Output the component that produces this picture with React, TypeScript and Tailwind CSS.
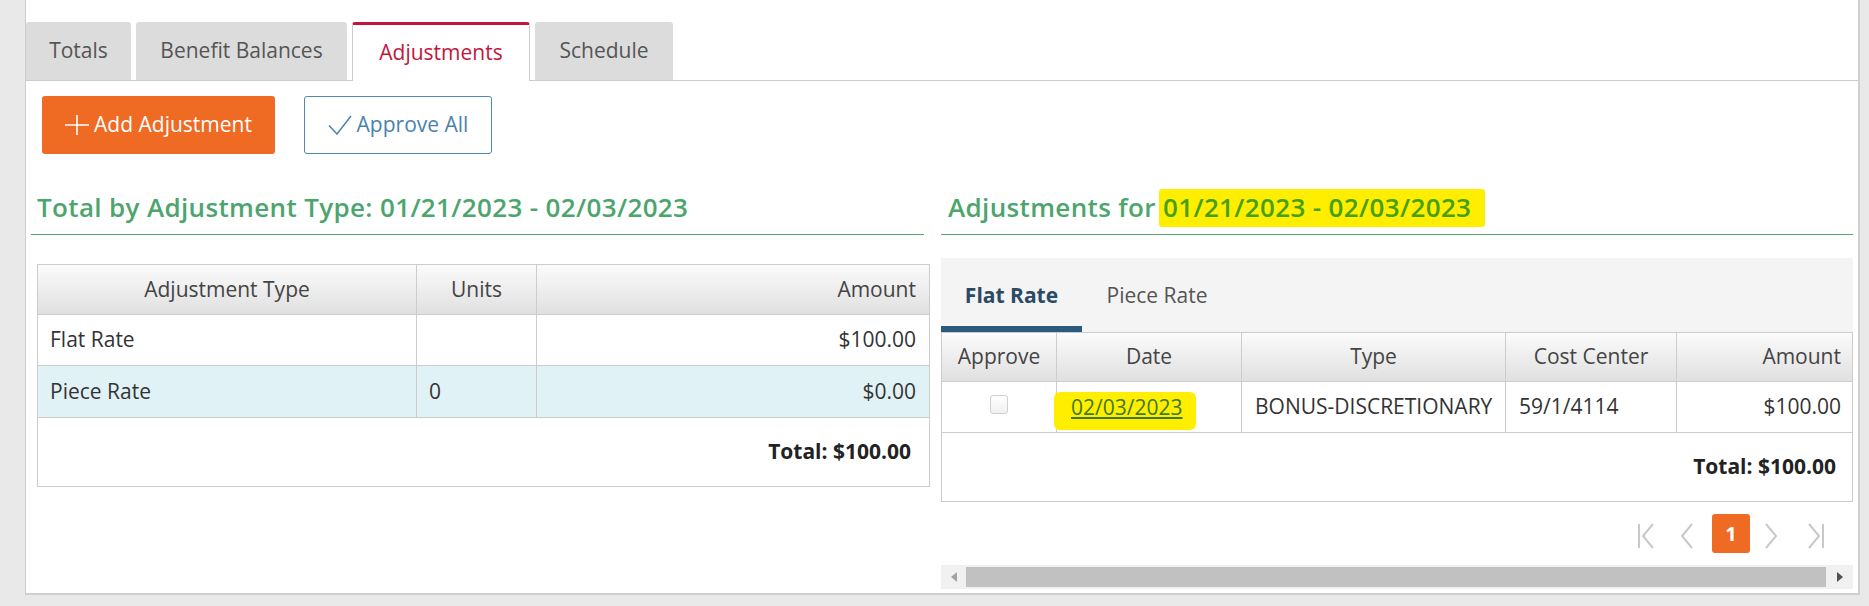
import React from 'react';

function PlusIcon() {
  return (
    <svg width="24" height="20" viewBox="0 0 24 20" fill="none" stroke="currentColor" strokeWidth="1.6">
      <path d="M12 0v20M0 10h24" />
    </svg>
  );
}

function CheckIcon() {
  return (
    <svg width="24" height="20" viewBox="0 0 24 20" fill="none" stroke="currentColor" strokeWidth="1.5">
      <path d="M1 10.5l8 8.5L23 1" />
    </svg>
  );
}

function PageIcon({ kind }: { kind: 'first' | 'prev' | 'next' | 'last' }) {
  const d =
    kind === 'first'
      ? 'M2 1v24M16 1L6 13l10 12'
      : kind === 'prev'
      ? 'M13 1L3 13l10 12'
      : kind === 'next'
      ? 'M3 1l10 12L3 25'
      : 'M18 1v24M4 1l10 12L4 25';
  return (
    <svg width="20" height="26" viewBox="0 0 20 26" fill="none" stroke="#c9c9c9" strokeWidth="2">
      <path d={d} />
    </svg>
  );
}

function Tab({ label, width, active }: { label: string; width: string; active?: boolean }) {
  if (active) {
    return (
      <div
        className={`${width} relative h-[59px] -mb-px flex items-center justify-center rounded-t-[3px] bg-white border-t-[3px] border-t-[#c3163c] border-x border-x-[#cccccc] text-[21px] text-[#c3163c]`}
      >
        {label}
      </div>
    );
  }
  return (
    <div className={`${width} h-[58px] flex items-center justify-center rounded-t-[3px] bg-[#dcdcdc] text-[21px] text-[#555555]`}>
      {label}
    </div>
  );
}

const headBg = 'bg-linear-to-b from-[#fbfbfb] to-[#e0e0e0]';

export default function App() {
  return (
    <div className="w-[1869px] h-[606px] bg-[#e9e9e9] font-['Open_Sans',sans-serif] overflow-hidden">
      <div className="ml-[25px] w-[1835px] h-[595px] bg-white border-l border-[#cccccc] border-r-2 border-r-[#d0d0d0] border-b-2 border-b-[#cfcfcf] pt-[22px]">
        {/* top tabs */}
        <div className="flex items-end gap-[5px] h-[59px] border-b border-[#cccccc]">
          <Tab label="Totals" width="w-[105px]" />
          <Tab label="Benefit Balances" width="w-[211px]" />
          <Tab label="Adjustments" width="w-[178px]" active />
          <Tab label="Schedule" width="w-[138px]" />
        </div>

        {/* buttons */}
        <div className="flex gap-[29px] pl-[16px] mt-[15px]">
          <button className="w-[233px] h-[58px] flex items-center justify-center gap-[5px] rounded-[3px] bg-[#ef6a23] text-white text-[21px]">
            <PlusIcon />
            <span>Add Adjustment</span>
          </button>
          <button className="w-[188px] h-[58px] flex items-center justify-center gap-[5px] rounded-[3px] bg-white border border-[#4d89b4] text-[#4a82b0] text-[21px]">
            <CheckIcon />
            <span>Approve All</span>
          </button>
        </div>

        <div className="flex gap-[11px] pl-[5px]">
          {/* left column */}
          <div className="w-[899px]">
            <div className="w-[893px] mt-[37px] pl-[6px] pb-[11px] border-b border-[#55a874]">
              <h2 className="text-[26px] leading-[32px] tracking-[0.35px] font-semibold text-[#4da56e]">
                Total by Adjustment Type: 01/21/2023 - 02/03/2023
              </h2>
            </div>

            <div className="ml-[6px] w-[893px] mt-[29px] border border-[#cccccc] text-[21px] text-[#333333]">
              <div className={`grid grid-cols-[379px_120px_1fr] h-[50px] border-b border-[#cccccc] ${headBg} text-[#444444]`}>
                <div className="flex items-center justify-center border-r border-[#cccccc]">Adjustment Type</div>
                <div className="flex items-center justify-center border-r border-[#cccccc]">Units</div>
                <div className="flex items-center justify-end pr-[13px]">Amount</div>
              </div>
              <div className="grid grid-cols-[379px_120px_1fr] h-[51px] border-b border-[#cccccc]">
                <div className="flex items-center pl-[12px] border-r border-[#cccccc]">Flat Rate</div>
                <div className="border-r border-[#cccccc]" />
                <div className="flex items-center justify-end pr-[13px]">$100.00</div>
              </div>
              <div className="grid grid-cols-[379px_120px_1fr] h-[52px] border-b border-[#cccccc] bg-[#e1f2f7]">
                <div className="flex items-center pl-[12px] border-r border-[#cccccc]">Piece Rate</div>
                <div className="flex items-center pl-[12px] border-r border-[#cccccc]">0</div>
                <div className="flex items-center justify-end pr-[13px]">$0.00</div>
              </div>
              <div className="h-[68px] flex items-center justify-end pr-[18px] font-bold text-[#222222]">
                Total: $100.00
              </div>
            </div>
          </div>

          {/* right column */}
          <div className="w-[912px]">
            <div className="mt-[37px] pl-[7px] pb-[11px] border-b border-[#55a874]">
              <h2 className="text-[26px] leading-[32px] tracking-[0.35px] font-semibold text-[#4da56e]">
                Adjustments for{' '}
                <span className="inline-block -ml-[4px] pl-[4px] pr-[14px] pt-[2px] -mt-[2px] pb-[4px] -mb-[4px] bg-[#ffee00] rounded-[3px] text-[#45a012]">
                  01/21/2023 - 02/03/2023
                </span>
              </h2>
            </div>

            <div className="mt-[23px] h-[74px] flex bg-[#f4f4f4] text-[21px]">
              <div className="w-[141px] pt-[8px] flex items-center justify-center border-b-[6px] border-[#2c5a7f] font-bold text-[#2b4a68]">
                Flat Rate
              </div>
              <div className="w-[150px] pt-[8px] flex items-center justify-center border-b-[6px] border-transparent text-[#555555]">
                Piece Rate
              </div>
            </div>

            <div className="border border-[#cccccc] text-[21px] text-[#333333]">
              <div className={`grid grid-cols-[115px_185px_264px_171px_1fr] h-[49px] border-b border-[#cccccc] ${headBg} text-[#444444]`}>
                <div className="flex items-center justify-center border-r border-[#cccccc]">Approve</div>
                <div className="flex items-center justify-center border-r border-[#cccccc]">Date</div>
                <div className="flex items-center justify-center border-r border-[#cccccc]">Type</div>
                <div className="flex items-center justify-center border-r border-[#cccccc]">Cost Center</div>
                <div className="flex items-center justify-end pr-[11px]">Amount</div>
              </div>
              <div className="grid grid-cols-[115px_185px_264px_171px_1fr] h-[51px] border-b border-[#cccccc]">
                <div className="flex items-center justify-center border-r border-[#cccccc]">
                  <span className="mb-[6px] w-[18px] h-[19px] rounded-[3px] border border-[#cfcfcf] bg-linear-to-b from-white to-[#f0f0f0]" />
                </div>
                <div className="flex items-center pl-[14px] border-r border-[#cccccc]">
                  <span className="-ml-[17px] pl-[17px] pr-[14px] pt-[0px] pb-[7px] mt-[8px] bg-[#ffee00] rounded-[6px]">
                    <a className="underline text-[#3d7a1e]">02/03/2023</a>
                  </span>
                </div>
                <div className="flex items-center pl-[13px] border-r border-[#cccccc]">BONUS-DISCRETIONARY</div>
                <div className="flex items-center pl-[13px] border-r border-[#cccccc]">59/1/4114</div>
                <div className="flex items-center justify-end pr-[11px]">$100.00</div>
              </div>
              <div className="h-[68px] flex items-center justify-end pr-[16px] font-bold text-[#222222]">
                Total: $100.00
              </div>
            </div>

            {/* pagination */}
            <div className="mt-[12px] flex justify-end gap-[2px] pr-[18px] h-[39px]">
              <div className="w-[40px] flex items-center justify-center pt-[4px]"><PageIcon kind="first" /></div>
              <div className="w-[40px] flex items-center justify-center pt-[4px]"><PageIcon kind="prev" /></div>
              <div className="w-[40px] flex items-center justify-center">
                <div className="w-[38px] h-[39px] rounded-[3px] bg-[#ef6a23] text-white font-bold text-[20px] flex items-center justify-center">
                  1
                </div>
              </div>
              <div className="w-[40px] flex items-center justify-center pt-[4px]"><PageIcon kind="next" /></div>
              <div className="w-[40px] flex items-center justify-center pt-[4px]"><PageIcon kind="last" /></div>
            </div>

            {/* horizontal scrollbar */}
            <div className="mt-[12px] h-[24px] flex items-center bg-[#f1f1f1]">
              <div className="w-[25px] flex items-center justify-center">
                <svg width="6" height="10" viewBox="0 0 6 10"><path d="M6 0v10L0 5z" fill="#a3a3a3" /></svg>
              </div>
              <div className="flex-1 h-[20px] bg-[#c1c1c1]" />
              <div className="w-[27px] flex items-center justify-center">
                <svg width="6" height="10" viewBox="0 0 6 10"><path d="M0 0v10l6-5z" fill="#505050" /></svg>
              </div>
            </div>
          </div>
        </div>
      </div>
    </div>
  );
}
